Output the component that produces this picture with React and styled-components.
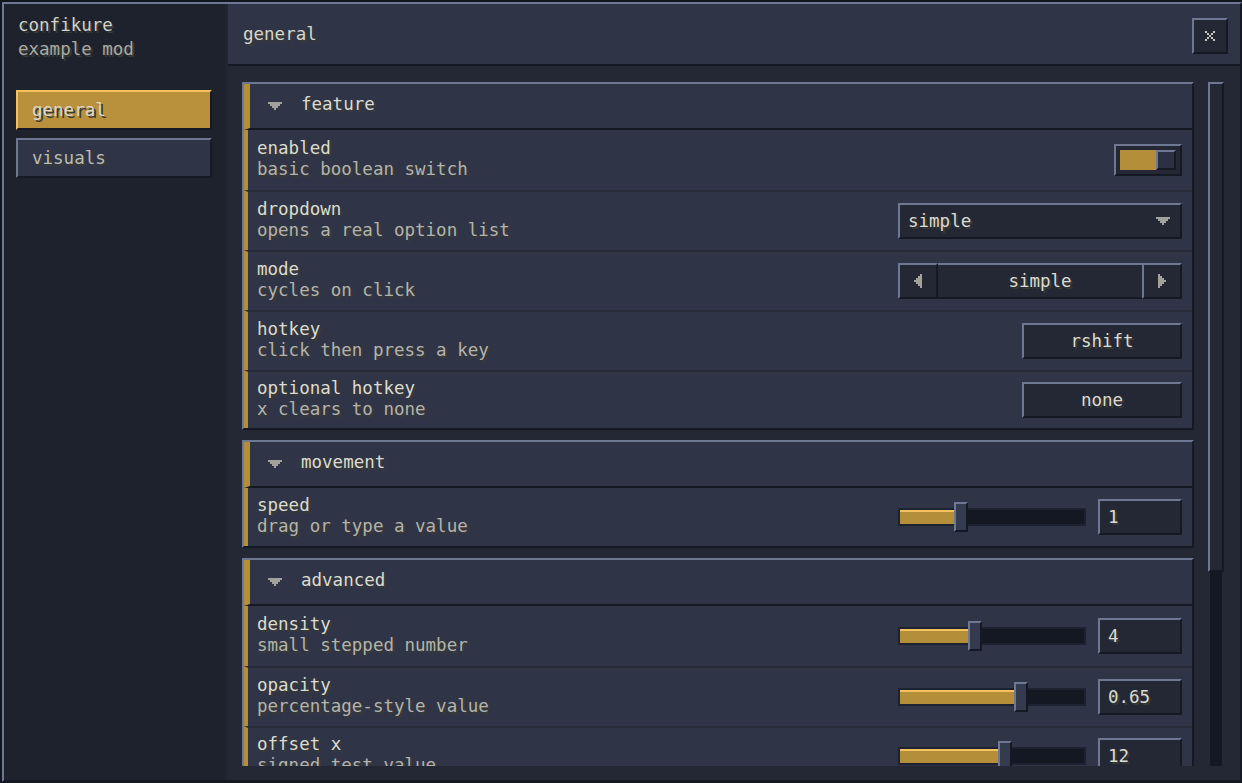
import React from 'react';
import styled, { createGlobalStyle } from 'styled-components';

const C = {
  page: '#12161d',
  light: '#6e7893',
  dark: '#141923',
  side: '#1e222d',
  sideEdge: '#21252f',
  panel: '#2f3547',
  well: '#232834',
  sep: '#262b37',
  trackEdge: '#1d2230',
  trackIn: '#131822',
  gold: '#b58e3a',
  goldNav: '#b9913c',
  goldLight: '#f3c15e',
  text: '#dcdcd2',
  dim: '#b4b4ac',
  icon: '#a2a29c',
  shadow: '#3a3a35',
};

const GlobalStyle = createGlobalStyle`
  html, body { margin: 0; padding: 0; background: ${C.page}; overflow: hidden; }
  body { font-family: "DejaVu Sans Mono", "Liberation Mono", monospace; }
  * { box-sizing: border-box; }
`;

const bevel = (top = C.light) => `
  border-style: solid;
  border-width: 2px;
  border-top-color: ${top};
  border-left-color: ${top};
  border-right-color: ${C.dark};
  border-bottom-color: ${C.dark};
`;

const Txt = styled.span`
  font-size: 17.5px;
  line-height: ${(p) => p.$lh || 21}px;
  color: ${(p) => p.$color || C.text};
  text-shadow: 2px 2px 0 ${C.shadow};
  white-space: nowrap;
`;

const Frame = styled.div`
  margin: 2px 0 0 2px;
  width: 1240px;
  height: 780px;
  border-top: 2px solid ${C.light};
  border-left: 2px solid ${C.light};
  border-right: 2px solid ${C.dark};
  border-bottom: 2px solid ${C.dark};
  display: flex;
  overflow: hidden;
`;

const Sidebar = styled.aside`
  width: 224px;
  flex: none;
  background: ${C.side};
  border-right: 3px solid ${C.sideEdge};
  padding: 9px 13px 0 12px;
  display: flex;
  flex-direction: column;
`;

const Brand = styled.div`
  display: flex;
  flex-direction: column;
  padding-left: 2px;
`;

const Nav = styled.nav`
  margin-top: 29px;
  display: flex;
  flex-direction: column;
  gap: 8px;
`;

const NavItem = styled.div`
  height: 40px;
  ${(p) => bevel(p.$active ? C.goldLight : C.light)}
  background: ${(p) => (p.$active ? C.goldNav : C.panel)};
  padding-left: 14px;
  display: flex;
  align-items: center;
`;

const Main = styled.main`
  flex: 1;
  display: flex;
  flex-direction: column;
  min-width: 0;
`;

const Header = styled.header`
  height: 62px;
  flex: none;
  background: ${C.panel};
  border-bottom: 2px solid ${C.dark};
  padding: 0 12px 0 15px;
  display: flex;
  align-items: center;
  justify-content: space-between;
`;

const CloseBtn = styled.div`
  width: 36px;
  height: 36px;
  margin-top: 4px;
  ${bevel()}
  background: ${C.well};
  display: flex;
  align-items: center;
  justify-content: center;
`;

const Content = styled.div`
  flex: 1;
  background: ${C.well};
  padding: 16px 16px 14px 14px;
  display: flex;
  min-height: 0;
`;

const Viewport = styled.div`
  flex: 1;
  overflow: hidden;
  display: flex;
  flex-direction: column;
  gap: 10px;
`;

const Scrollbar = styled.div`
  width: 16px;
  margin-left: 14px;
  display: flex;
  flex-direction: column;
`;

const Thumb = styled.div`
  height: 490px;
  flex: none;
  ${bevel()}
  background: ${C.well};
`;

const Track = styled.div`
  flex: 1;
  margin: 0 2px;
  background: ${C.trackIn};
`;

const Section = styled.section`
  flex: none;
  ${bevel()}
  background: ${C.panel};
`;

const SectionHeader = styled.div`
  height: 46px;
  border-left: 6px solid ${C.gold};
  border-bottom: 2px solid ${C.dark};
  padding-left: 18px;
  display: flex;
  align-items: center;
  gap: 19px;
`;

const HeaderLabel = styled(Txt)`
  padding-bottom: 4px;
`;

const Row = styled.div`
  height: 60px;
  border-left: 4px solid ${C.gold};
  padding: 0 10px 0 9px;
  display: flex;
  align-items: center;
  justify-content: space-between;
  & + & { border-top: 2px solid ${C.sep}; }
  &:last-child { height: 58px; }
`;

const RowText = styled.div`
  display: flex;
  flex-direction: column;
  padding-bottom: 3px;
`;

const Toggle = styled.div`
  width: 68px;
  height: 32px;
  ${bevel()}
  background: ${C.well};
  padding: 4px;
  display: flex;
`;

const ToggleFill = styled.div`
  width: 36px;
  background: ${C.gold};
`;

const ToggleKnob = styled.div`
  width: 20px;
  ${bevel()}
  background: #2c3142;
`;

const Box = styled.div`
  width: ${(p) => p.$w}px;
  height: 36px;
  ${bevel()}
  background: ${C.well};
  display: flex;
  align-items: center;
  justify-content: ${(p) => p.$justify || 'center'};
  padding: ${(p) => p.$pad || '0'};
`;

const Cycle = styled.div`
  width: 284px;
  height: 36px;
  display: flex;
`;

const CycleArrow = styled.div`
  width: 40px;
  ${bevel()}
  background: ${C.well};
  display: flex;
  align-items: center;
  justify-content: center;
`;

const CycleMid = styled.div`
  flex: 1;
  border-top: 2px solid ${C.light};
  border-bottom: 2px solid ${C.dark};
  background: ${C.well};
  display: flex;
  align-items: center;
  justify-content: center;
`;

const SliderGroup = styled.div`
  display: flex;
  align-items: center;
  gap: 12px;
`;

const SliderWrap = styled.div`
  position: relative;
  width: 188px;
  height: 30px;
  display: flex;
  align-items: center;
`;

const SliderTrack = styled.div`
  width: 188px;
  height: 18px;
  border: 2px solid ${C.trackEdge};
  background: ${C.trackIn};
  display: flex;
`;

const SliderFill = styled.div`
  height: 14px;
  background: ${C.gold};
  border-top: 2px solid ${C.goldLight};
`;

const SliderKnob = styled.div`
  position: absolute;
  top: 0;
  width: 14px;
  height: 30px;
  ${bevel()}
  background: #353b4f;
`;

const Pixels = ({ cells, size = 2, color, w, h }) => (
  <svg width={w * size} height={h * size} viewBox={`0 0 ${w * size} ${h * size}`} style={{ display: 'block' }}>
    {cells.map(([x, y, len = 1], i) => (
      <rect key={i} x={x * size} y={y * size} width={len * size} height={size} fill={color} />
    ))}
  </svg>
);

const DownTri = ({ color = C.icon }) => (
  <Pixels w={7} h={4} color={color} cells={[[0, 0, 7], [1, 1, 5], [2, 2, 3], [3, 3, 1]]} />
);

const LeftTri = () => (
  <Pixels w={4} h={7} color={C.icon} cells={[[3, 0], [2, 1, 2], [1, 2, 3], [0, 3, 4], [1, 4, 3], [2, 5, 2], [3, 6]]} />
);

const RightTri = () => (
  <Pixels w={4} h={7} color={C.icon} cells={[[0, 0], [0, 1, 2], [0, 2, 3], [0, 3, 4], [0, 4, 3], [0, 5, 2], [0, 6]]} />
);

const CloseX = () => (
  <Pixels w={5} h={5} color="#c6c6be" cells={[[0, 0], [4, 0], [1, 1], [3, 1], [2, 2], [1, 3], [3, 3], [0, 4], [4, 4]]} />
);

const Slider = ({ frac, value }) => {
  const fill = Math.round(frac * 170);
  return (
    <SliderGroup>
      <SliderWrap>
        <SliderTrack>
          <SliderFill style={{ width: fill }} />
        </SliderTrack>
        <SliderKnob style={{ left: fill + 2 }} />
      </SliderWrap>
      <Box $w={84} $justify="flex-start" $pad="0 0 0 8px">
        <Txt>{value}</Txt>
      </Box>
    </SliderGroup>
  );
};

const Setting = ({ label, desc, children }) => (
  <Row>
    <RowText>
      <Txt>{label}</Txt>
      <Txt $color={C.dim}>{desc}</Txt>
    </RowText>
    {children}
  </Row>
);

const Group = ({ title, children }) => (
  <Section>
    <SectionHeader>
      <DownTri />
      <HeaderLabel>{title}</HeaderLabel>
    </SectionHeader>
    {children}
  </Section>
);

export default function App() {
  return (
    <>
      <GlobalStyle />
      <Frame>
        <Sidebar>
          <Brand>
            <Txt $lh={24} $color="#d2d2c8">confikure</Txt>
            <Txt $lh={24} $color="#aaaaa2">example mod</Txt>
          </Brand>
          <Nav>
            <NavItem $active>
              <Txt $color="#d8d8ce">general</Txt>
            </NavItem>
            <NavItem>
              <Txt $color="#bcbcb4">visuals</Txt>
            </NavItem>
          </Nav>
        </Sidebar>
        <Main>
          <Header>
            <Txt $color="#d6d6cc">general</Txt>
            <CloseBtn>
              <CloseX />
            </CloseBtn>
          </Header>
          <Content>
            <Viewport>
              <Group title="feature">
                <Setting label="enabled" desc="basic boolean switch">
                  <Toggle>
                    <ToggleFill />
                    <ToggleKnob />
                  </Toggle>
                </Setting>
                <Setting label="dropdown" desc="opens a real option list">
                  <Box $w={284} $justify="space-between" $pad="0 10px 0 8px">
                    <Txt>simple</Txt>
                    <DownTri />
                  </Box>
                </Setting>
                <Setting label="mode" desc="cycles on click">
                  <Cycle>
                    <CycleArrow>
                      <LeftTri />
                    </CycleArrow>
                    <CycleMid>
                      <Txt>simple</Txt>
                    </CycleMid>
                    <CycleArrow>
                      <RightTri />
                    </CycleArrow>
                  </Cycle>
                </Setting>
                <Setting label="hotkey" desc="click then press a key">
                  <Box $w={160}>
                    <Txt>rshift</Txt>
                  </Box>
                </Setting>
                <Setting label="optional hotkey" desc="x clears to none">
                  <Box $w={160}>
                    <Txt>none</Txt>
                  </Box>
                </Setting>
              </Group>
              <Group title="movement">
                <Setting label="speed" desc="drag or type a value">
                  <Slider frac={0.318} value="1" />
                </Setting>
              </Group>
              <Group title="advanced">
                <Setting label="density" desc="small stepped number">
                  <Slider frac={0.4} value="4" />
                </Setting>
                <Setting label="opacity" desc="percentage-style value">
                  <Slider frac={0.671} value="0.65" />
                </Setting>
                <Setting label="offset x" desc="signed test value">
                  <Slider frac={0.576} value="12" />
                </Setting>
              </Group>
            </Viewport>
            <Scrollbar>
              <Thumb />
              <Track />
            </Scrollbar>
          </Content>
        </Main>
      </Frame>
    </>
  );
}
